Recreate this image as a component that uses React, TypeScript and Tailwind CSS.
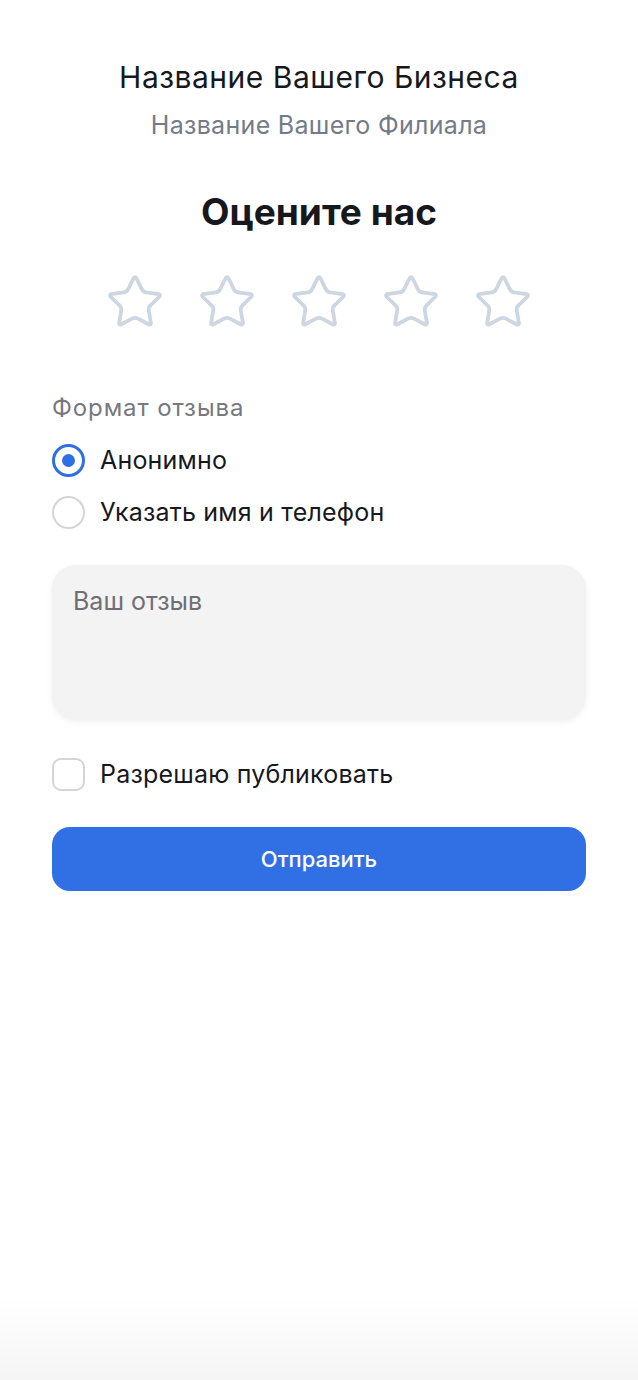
import { useState } from 'react';

const STARS = [1, 2, 3, 4, 5];

function Star() {
  return (
    <svg width="60" height="60" viewBox="0 0 24 24" fill="none" stroke="#cdd6e1" strokeWidth="1.5" strokeLinecap="round" strokeLinejoin="round">
      <path d="M11.525 2.295a.53.53 0 0 1 .95 0l2.31 4.679a2.123 2.123 0 0 0 1.595 1.16l5.166.756a.53.53 0 0 1 .294.904l-3.736 3.638a2.123 2.123 0 0 0-.611 1.878l.882 5.14a.53.53 0 0 1-.771.56l-4.618-2.428a2.122 2.122 0 0 0-1.973 0L6.396 21.01a.53.53 0 0 1-.77-.56l.881-5.139a2.122 2.122 0 0 0-.611-1.879L2.16 9.795a.53.53 0 0 1 .294-.906l5.165-.755a2.122 2.122 0 0 0 1.597-1.16z" />
    </svg>
  );
}

export default function App() {
  const [mode, setMode] = useState('anon');
  const [pub, setPub] = useState(false);

  return (
    <div className="min-h-[1380px] bg-gradient-to-b from-white from-[94%] to-[#f5f5f5] px-[52px] pt-[56px] text-[#16181d]" style={{ fontFamily: 'Inter, "Noto Sans", sans-serif' }}>
      <div className="text-center">
        <h2 className="text-[30px] leading-[42px] tracking-[0.5px]">Название Вашего Бизнеса</h2>
        <p className="mt-[10px] text-[25px] leading-[34px] tracking-[0.3px] text-[#737b88]">Название Вашего Филиала</p>
        <h1 className="mt-[48px] text-[37px] leading-[44px] font-bold">Оцените нас</h1>
      </div>

      {/* rating */}
      <div className="mt-[38px] flex justify-center gap-[32px]">
        {STARS.map((s) => <button key={s}><Star /></button>)}
      </div>

      <div className="mt-[61px] text-[24px] leading-[30px] tracking-[0.9px] text-[#777880]">Формат отзыва</div>
      <div className="mt-[20px] flex flex-col gap-[18px]">
        {[['anon', 'Анонимно'], ['named', 'Указать имя и телефон']].map(([k, label]) => (
          <label key={k} className="flex items-center gap-[15px] text-[25px] leading-[34px] tracking-[0.2px] cursor-pointer" onClick={() => setMode(k)}>
            {mode === k ? (
              <span className="w-[33px] h-[33px] rounded-full border-[3px] border-[#2f6fe4] flex items-center justify-center">
                <span className="w-[13px] h-[13px] rounded-full bg-[#2f6fe4]" />
              </span>
            ) : (
              <span className="w-[33px] h-[33px] rounded-full border-2 border-[#d5d5d8]" />
            )}
            {label}
          </label>
        ))}
      </div>

      <textarea
        placeholder="Ваш отзыв"
        className="mt-[36px] block w-full h-[155px] resize-none rounded-[24px] bg-[#f3f3f3] px-[21px] py-[20px] text-[25px] leading-[32px] shadow-[0_2px_6px_rgba(0,0,0,0.06)] outline-none placeholder:text-[#6e6e73]"
      />

      <label className="mt-[37px] flex items-center gap-[15px] text-[25px] leading-[34px] tracking-[0.2px] cursor-pointer" onClick={() => setPub(!pub)}>
        <span className={`w-[33px] h-[33px] rounded-[9px] border-2 ${pub ? 'border-[#2f6fe4] bg-[#2f6fe4]' : 'border-[#d5d5d8]'}`} />
        Разрешаю публиковать
      </label>

      <button className="mt-[36px] w-full h-[64px] rounded-[18px] bg-[#316fe4] text-white text-[22px] font-medium">Отправить</button>
    </div>
  );
}
